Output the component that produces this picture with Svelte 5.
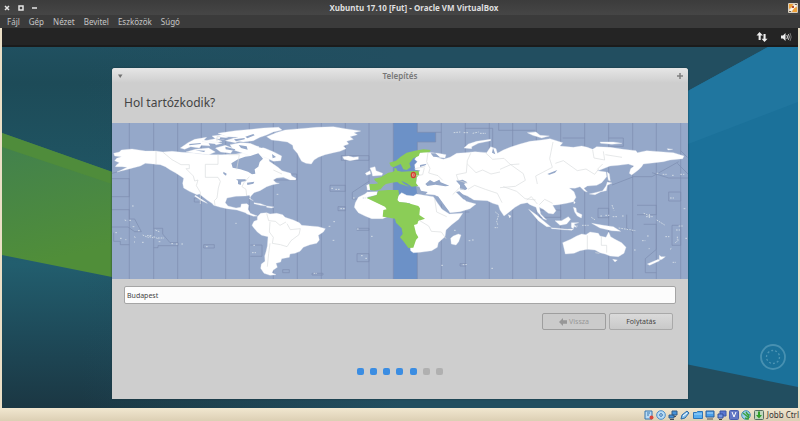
<script lang="ts">
	const menus = ['Fájl', 'Gép', 'Nézet', 'Bevitel', 'Eszközök', 'Súgó'];
	const steps = [1, 2, 3, 4, 5, 6, 7];
	const currentStep = 5;

	// straight parts of the time zone borders
	const zones = [52, 125, 197, 268, 341, 412, 484, 556, 628, 700, 771, 988, 1060, 1132, 1202, 1273, 1346, 1418, 1490, 1562, 1633, 1706];

	let city = $state('Budapest');
</script>

<div class="machine">
	<header class="titlebar">
		<div class="controls">
			<button aria-label="Bezárás">
				<svg viewBox="0 0 6 6"><path d="M1 1l4 4M5 1L1 5" /></svg>
			</button>
			<button aria-label="Teljes méret">
				<svg viewBox="0 0 6 6"><path d="M1 1h4v4H1z" /></svg>
			</button>
			<button aria-label="Kis méret">
				<svg viewBox="0 0 6 6"><path d="M0 3h5" /></svg>
			</button>
		</div>
		<h1>Xubuntu 17.10 [Fut] - Oracle VM VirtualBox</h1>
		<svg class="app-icon" viewBox="0 0 10 10">
			<rect width="10" height="10" rx="1" fill="#d9cfbe" />
			<path d="M1 1h4l-1 3-3 2zM6 5l3-1v5H4z" fill="#f0a238" />
			<path d="M2 8l6-6" stroke="#fff5e4" stroke-width="2" />
			<path d="M4 3h2v2H4z" fill="#b34a2f" />
			<path d="M1 8h2v1H1zM7 1h2v1H7z" fill="#6b6055" />
		</svg>
	</header>

	<nav class="menubar">
		{#each menus as menu}
			<button>{menu}</button>
		{/each}
	</nav>

	<main class="guest">
		<div class="panel">
			<svg class="net" viewBox="0 0 12 12" fill="#eee">
				<path d="M3.5 1L7 4.600H4.700V9H2.600V4.600H.5zM8.500 11L5.500 7.700H7.500V3H9.600V7.700h2z" />
			</svg>
			<svg class="sound" viewBox="0 0 12 12" fill="none" stroke="#ddd">
				<path d="M1 4.500h2L5.500 2v8L3 7.500H1z" fill="#eee" stroke="none" />
				<path d="M6.800 4q1.400 2 0 4" />
				<path d="M8.300 3q2 3 0 6" stroke="#bbb" />
				<path d="M10 2q2.400 4 0 8" stroke="#777" />
			</svg>
		</div>

		<div class="desktop">
			<svg class="wallpaper" viewBox="0 0 796 361" preserveAspectRatio="none">
				<defs>
					<linearGradient id="base" x1="0" y1="0" x2="0" y2="1">
						<stop offset="0" stop-color="#205060" />
						<stop offset=".1" stop-color="#1d4b58" />
						<stop offset=".6" stop-color="#225e6e" />
						<stop offset=".8" stop-color="#1e4a59" />
						<stop offset="1" stop-color="#1b3743" />
					</linearGradient>
					<linearGradient id="right-shade">
						<stop offset=".1" stop-color="#224e60" stop-opacity="0" />
						<stop offset=".5" stop-color="#224e60" />
					</linearGradient>
					<linearGradient id="green" x1="0" y1="0" x2=".3" y2="1">
						<stop offset="0" stop-color="#41804f" />
						<stop offset=".8" stop-color="#508e39" />
					</linearGradient>
				</defs>
				<path d="M0 0h796v361H0z" fill="url(#base)" />
				<path d="M0 0h796v361H0z" fill="url(#right-shade)" />
				<path d="M0 86L190 153V246L0 208z" fill="url(#green)" />
				<path d="M0 86L110 125V137L0 100z" fill="#4f8c3b" />
				<path d="M766 0h30v340L600 300V91z" fill="#1b719a" />
				<path d="M766 0h30v55L600 130V91z" fill="#20769f" />
			</svg>

			<section class="window">
				<header class="window-title">
					<button aria-label="Ablak menü">
						<svg viewBox="0 0 6 6"><path d="M1 1.500h4.500L3.200 5z" fill="#707070" /></svg>
					</button>
					<h2>Telepítés</h2>
					<button aria-label="Nagyítás">
						<svg viewBox="0 0 6 6"><path d="M3 0v6M0 3h6" stroke="#808080" stroke-width="1.500" /></svg>
					</button>
				</header>

				<h3>Hol tartózkodik?</h3>

				<svg class="map" viewBox="0 9 1728 468" role="img" aria-label="Időzónák térképe">
					<path d="M0 9h1728v468H0z" fill="#95a8c9" />
					<path d="M844 9h72v28h55v29h-55v411h-72z" fill="#6c91c7" />

					<g class="zones">
						{#each zones as x}
							<path d="M{x} 9v468" />
						{/each}
						<path d="M844 9v468M916 9v28h55v29h-55v411" />
						<path d="M0 160l52-14M0 176h52v54H0M0 269h52v28l16 0 20 38H68L48 321H0M5 338v26h20v10h27M125 325h27v17l22 26h24v9h-60v6h-13" />
						<path d="M247 234h21v12h-21zM275 374h32v10h-32zM415 375h35v34h-35M484 162h70v18h-70M654 196h46v18h-46zM678 260h22v12h-22z" />
						<path d="M688 107h83v14h-83zM771 184l-50 33v20h50M734 325h37v6h-37M735 401h36v24h-36zM600 460h33v5h-33zM512 449h20v9h-20z" />
						<path d="M971 37h17M1060 25h82v80M1060 276h12M1044 431h18v7h-18zM1160 9v22h110M1352 54h66M1490 54h44v25h-44" />
						<path d="M1706 92l20 20M1696 130l32 32M1500 195l65-25h55l80-45M1620 158l50 16h58M1670 216h36v27h-36zM1458 265h32v28h-32zM1575 256h58v28h-58M1544 284v40l18 12M1595 313h38v75l-33 28v42h33M1680 316h26v60h-26zM1282 270h64v22h-64z" />
					</g>

					<!-- Americas -->
					<g class="land">
						<path d="M5 100L22 96 28 90 60 87 100 93 132 93 152 96 180 94 210 97 240 98 270 102 300 104 330 104 372 102 395 98 430 106 450 102 470 112 472 124 498 142 510 152 536 160 539 168 552 175 551 180 534 180 514 172 494 174 484 180 492 188 502 190 479 195 464 200 444 212 426 218 417 228 412 236 424 242 416 238 412 226 400 228 372 229 345 234 340 248 348 258 372 264 386 262 388 252 405 251 410 256 408 268 415 280 436 288 425 289 405 282 400 278 375 270 345 266 325 262 305 256 300 250 285 240 262 222 255 224 232 214 215 204 212 190 215 175 205 168 190 158 175 150 160 140 145 134 115 131 100 130 85 138 65 143 40 150 15 156 28 150 45 142 30 140 10 140 14 134 22 128 8 122 14 115 28 110 8 108z" />
						<path d="M250 226l28 18 8 6-16-7-22-14z" />
						<path d="M205 84L228 68 248 58 284 52 276 60 296 64 330 70 300 78 268 76 262 84 236 80 218 88zM222 96L250 88 290 84 310 96 290 104 250 100zM300 48l30-4 20 6-15 8-25-2zM340 62l26-8 22 6-18 8zM310 84l30-8 26 10-10 14-30-4zM270 64l40-8 20 8-30 8z" />
						<path d="M318 40L370 32 420 28 454 24 500 22 510 30 484 36 464 45 444 52 424 62 394 66 354 60 378 52 344 50z" />
						<path d="M354 74L385 68 414 70 434 78 459 85 484 95 509 108 506 122 484 124 464 114 444 108 424 112 394 100 364 90z" />
					</g>
					<g class="sea">
						<path d="M378 118l-20 12 4 13 23 5 23 7 12 8 10-2-2-13 11-8 4-14 10-10-14-16-24 8-16 2z" />
						<path d="M334 155l10 6-2 6-8-6zM372 178l28 0 4 5-16 2-2 10-8-3 0-10zM405 188l22-3-3 6-18 4zM440 82l8-14 4 16zM380 75l24 4 3 10-20-5zM325 52l24 2-4 5-22-2zM290 70l20 2 3 10-8 5-10-8zM400 50l24-8 4 4-22 9z" />
						<path d="M232 72l34-3v3l-34 4zM250 91l30 1-4 4zM340 80l30 8-3 4-26-4zM480 102l12 9-10 4zM366 58l32-4v4l-26 6z" />
					</g>

					<!-- Greenland, South America, Atlantic -->
					<g class="land" transform="translate(414)">
						<path d="M50 50L78 38 105 30 150 26 200 22 250 20 285 26 332 33 312 38 322 44 300 50 310 58 290 64 296 72 280 78 288 86 270 94 250 98 225 104 205 112 192 120 184 132 168 130 155 124 148 112 142 100 130 86 128 76 112 66 85 62 65 60z" />
						<path d="M278 110l17-2 15 4 15-2v8l-25 4-18-4z" />
						<path d="M12 248l20 3 18 7-18-2-20-5zM50 258l22 3-8 3-14-2zM24 290h4" />
						<path d="M22 290L32 280 50 278 60 282 80 280 98 284 105 292 130 300 148 308 155 316 180 318 205 320 226 326 220 336 205 346 208 360 200 370 180 374 160 382 150 394 135 400 120 402 118 412 95 416 92 426 78 430 82 442 70 450 66 458 78 464 60 466 42 460 32 445 34 432 45 424 44 408 48 395 52 378 54 350 35 346 22 336 10 322 6 316 12 304 22 300z" />
						<path d="M325 232L345 222 352 216 382 215 380 225 350 232 410 262 412 290 398 296 365 296 345 288 325 278 313 262 316 248z" />
					</g>

					<!-- Eurasia and Africa -->
					<g class="land" transform="translate(744)">
						<path d="M112 230L125 218 140 226 160 228 170 222 220 230 232 248 246 268 268 282 308 280 296 298 275 314 258 330 255 350 235 368 232 382 215 392 180 397 160 398 152 392 148 360 160 300 150 250 112 246z" />
						<path d="M272 355l8-7 15-6 8 3-7 20-8 10-14-3z" />
						<path d="M30 144L45 140 48 152 68 160 66 166 38 168 35 155zM16 160L30 152 32 162 20 166zM20 196L28 192 32 210 22 210z" />
						<path d="M178 98L195 95 215 98 235 100 258 104 255 114 230 112 250 118 270 112 290 100 315 98 345 95 380 98 392 80 408 86 412 100 430 90 450 82 480 72 510 64 545 60 570 56 608 68 600 78 640 82 665 78 682 82 698 88 710 80 750 82 790 88 828 92 832 98 860 92 900 95 940 98 972 108 968 116 930 120 910 125 850 132 845 140 835 150 815 165 808 160 812 146 822 138 805 132 775 136 750 138 720 150 712 152 738 156 740 170 725 188 710 196 682 198 672 205 682 216 674 214 660 200 645 205 628 204 642 215 648 232 640 245 620 250 595 254 578 256 588 272 580 282 565 280 550 268 538 262 542 282 560 300 550 296 532 275 528 262 510 254 502 248 482 252 465 262 445 278 432 288 420 270 415 255 398 250 382 242 342 240 322 228 305 222 318 244 348 252 330 266 300 275 270 278 248 248 234 230 225 225 195 222 178 215 173 205 168 190 170 172 180 150 166 150 164 134 172 125 164 118z" />
						<path d="M312 84L325 72 350 64 392 58 392 62 355 70 335 80 335 86z" />
					</g>
					<g class="sea" transform="translate(744)">
						<path d="M196 192l14-12 12 7 16-8 4 8 26 10-12 2-30-5-24 4zM288 182l20-3 14 8-10 5 10 14-6 4-16-2 0-12zM228 230l6-1 18 26 16 20-6 0-18-24zM288 216l10-2 20 18 16 4-6 8-18-6zM168 198l10 2 5 12 20 4-8 8-24-5z" />
						<path d="M562 162l30-12-7 8-17 6zM180 135l20-4-4 5-16 5zM212 100l8 10 20 2-14-12zM399 83l7 20-10-5z" />
					</g>
					<g class="zone-land" transform="translate(744)">
						<path d="M20 234L50 225 55 212 85 210 115 210 117 222 112 240 118 246 140 248 175 258 180 265 178 285 195 296 175 303 172 312 162 315 168 340 175 352 168 360 160 383 145 384 132 366 120 352 128 342 125 325 108 308 105 296 80 292 68 290 70 270 80 268 75 260z" />
						<path d="M28 192L45 192 55 190 45 182 42 176 62 172 85 158 98 156 105 150 100 146 108 144 112 152 125 155 150 154 175 152 178 165 170 172 168 190 175 198 155 200 140 190 124 182 130 190 148 200 120 192 112 186 95 188 78 192 70 198 62 208 45 212 30 210z" />
						<path d="M88 128L108 122 122 110 140 98 165 92 190 88 212 90 208 97 180 98 176 108 160 115 148 130 152 142 140 150 130 148 122 132 100 142 92 138z" />
					</g>

					<!-- Pacific side -->
					<g class="land" transform="translate(1164)">
						<path d="M188 368L212 358 230 348 245 342 258 344 270 336 295 340 300 348 318 352 326 336 332 350 345 358 365 368 378 382 372 400 355 410 330 408 315 402 300 398 285 390 262 388 240 392 222 400 196 402 192 385z" />
						<path d="M338 418l14 2-7 6zM478 406l6 4 12 0-10 8-8 2zM442 432l33-14 4 4-30 14z" />
						<path d="M165 302L185 302 205 290 212 298 200 312 180 316zM86 268L110 285 130 302 152 320 140 320 115 302zM152 323l50 5 18-1-4 4-60-5zM214 308l22 0-14 4 8 10-8-2-2 6-6-4zM275 310l35 6 30 4 22 14-27-2-35-8z" />
						<path d="M220 262l8 2 2 12 16 8-2 10-12-6-8-12zM221 243l5 4-4 5zM25 284l8 4-4 6zM268 222l17-4 23-6 10-14 4-12 14 3-14 7-3 16-16 3-18 9zM321 156l7 5 3 22-6-2z" />
						<path d="M82 38l26-2 12 10 28 2-23 6-27-8zM300 66l40 0 26 4-30 3-34-3zM502 86l16 2-14 2z" />
					</g>

					<!-- small islands -->
					<path class="islands" d="M60 258h5M38 300l8 3M52 301h7M62 320h6M78 332h7M10 338h8M24 355h5M40 359h3M66 350l6 3M66 366h3M92 345l18 8M105 347h14M112 350l14 4M125 350l15 7M138 354h18M140 365h8M130 330l14 6M90 367h5M178 371h8M192 372h6M208 372h5M282 380h6M370 310h4M424 376h6M420 398h12M494 223h5M658 205h8M670 208h15M685 266h13M723 234h8M752 234h10M664 305h5M650 319h5M662 361h6M735 327h6M777 349h5M747 407h6M760 415h5M605 460h10" />
					<path class="islands" d="M1025 38l20-2M1055 38h16M1082 40l18-4M1104 40h18M1150 276l10 8-6 20 3 10M1148 323h10M1070 362h5M1080 360h5M1026 331h8M1052 434h14M1138 445h8M988 436h6M1500 255l6 16M1438 292l12 8M1465 288h8M1480 286h12M1502 290h14M1530 288h8M1410 316h20M1385 318h12M1520 324l50 8M1595 280l20 8M1602 290h20M1612 282v12M1634 300l24 15M1590 362h10M1605 348h6M1566 390h6M1610 386h3M1660 350h12M1674 388l6-4M1692 330h12M1700 318h12M1696 350v10M1690 368l12-10M1720 355h5M1715 266h8M1634 160h8M1652 163h12M1680 166h8M1705 163h12M1674 234h12M1682 427h10" />

					<path class="borders" d="M132 93v40M152 96l28 23 27 15h25v12h-10l22 22 4 15 10-3-5 17 12 20v35M318 104v29h-38v39h38l7 12-6 20-4 30-8 8 2 14M350 104h32l-8 44M412 170l-16 18-6 12 12 8 2 20M484 150l26 12M315 64v-14h10" />
					<path class="borders" d="M464 280l6 22 20 2 14 12 18-10M474 306l-2 30 12 16-3 18 24 4 20 6 12-18 24-18 4-18-30 3-10-18M474 370l-4 30-4 40" />
					<path class="borders" d="M910 168l22-4 5-20M908 146l32-6M948 97l-4 28 10 20-4 14 28 8 14 14M1022 224l20-20 15 6M1076 100l-10 22-3 36-30 6 5 16 28 10M1066 132l26 26 20-8 25 12 27-6M1068 208l20-12 32 12 36 12 14 28M1120 98l22 20 34-3 16 16 42 30 6 20-30 18-46 4M1276 192l-5-24 50-26-8-26 10-50M1174 200l40 14 25 22 32 4M1164 148l32-14 26-2M1244 240l14-10 18 22M1282 254l16-16 24 12M1330 130l24-8 42 30 26-5 26 16 12-16M1442 90l4 24 32 6-4-26M1480 104l50 8M1472 132l-16 16M1426 346v42M1468 348v28h16v22M1450 398l12 2" />
					<path class="borders" d="M920 300l30 18 8 16 30 2 14 20M968 236l6 40 30 14" />

					<ellipse cx="904" cy="165" rx="6" ry="8" fill="#e9aea0" stroke="#d23c2e" stroke-width="4" />
					<path d="M904 160v10" stroke="#c73a30" stroke-width="2" />
				</svg>

				<input type="text" aria-label="Város" bind:value={city} />

				<div class="actions">
					<button disabled>
						<svg viewBox="0 0 8 8"><path d="M4 0v2.300h4v3.400H4V8L0 4z" fill="#979797" /></svg>
						Vissza
					</button>
					<button>Folytatás</button>
				</div>

				<div class="steps">
					{#each steps as step}
						<span class:done={step <= currentStep}></span>
					{/each}
				</div>
			</section>

			<svg class="ring" viewBox="0 0 26 26" fill="none" stroke="#5fa2bd">
				<circle cx="13" cy="13" r="12" stroke-width="1.800" opacity=".65" />
				<circle cx="13" cy="13" r="6.500" stroke-width="1.300" stroke-dasharray="2 2" opacity=".75" />
			</svg>
		</div>
	</main>

	<footer class="statusbar">
		<div class="devices">
			<svg viewBox="0 0 10 10">
				<path d="M1 1h7v8H1z" fill="#b9dcf5" stroke="#3774ae" />
				<path d="M3 3h3M3 5h2" stroke="#3774ae" />
				<circle cx="7.500" cy="7.500" r="2" fill="#d9453c" />
			</svg>
			<svg viewBox="0 0 10 10">
				<circle cx="5" cy="5" r="4.300" fill="#b7dcf6" stroke="#4a8cc8" />
				<circle cx="5" cy="5" r="1.300" fill="#fff" stroke="#2c6cab" />
			</svg>
			<svg viewBox="0 0 10 10">
				<path d="M4 1h5v4H4zM1 5h5v3H1z" fill="#4592d8" stroke="#315a86" />
				<path d="M2 9.500h4M6 6.500h2" stroke="#454f5c" />
			</svg>
			<svg viewBox="0 0 10 10">
				<path d="M1 9l1-4 5-4 2 2-4 5z" fill="#8ac3ee" stroke="#2c6aa5" />
				<path d="M3 6l4-3" stroke="#fff" />
			</svg>
			<svg viewBox="0 0 10 10">
				<path d="M.5 2.500h3l1-1h5v7h-9z" fill="#58aef0" stroke="#2d75b9" />
				<path d="M1 4h8" stroke="#a6d7fa" />
			</svg>
			<svg viewBox="0 0 10 10">
				<path d="M1 1h8v6H1z" fill="#4a9ee8" stroke="#2d5f9b" />
				<path d="M2 3h6" stroke="#afd9fa" />
				<path d="M2 9h6" stroke="#555" />
			</svg>
			<svg viewBox="0 0 10 10">
				<path d="M3 1h6v5H3z" fill="#5a77d2" stroke="#3957a6" />
				<path d="M1 4h5v4H1z" fill="#7295e6" stroke="#334f97" />
				<path d="M2 9.500h3" stroke="#444" />
			</svg>
			<svg viewBox="0 0 10 10">
				<rect x=".5" y=".5" width="9" height="9" rx="1" fill="#6377c5" stroke="#475dad" />
				<path d="M3 2l2 5 2-5" fill="none" stroke="#fff" />
			</svg>
			<svg viewBox="0 0 10 10">
				<circle cx="5" cy="5" r="4.300" fill="#9dd3e9" stroke="#438db3" />
				<path d="M2 3l5 4M4 8l3 1 1-5M5 2l2 3" stroke="#3ca13d" stroke-width="1.500" fill="none" />
			</svg>
			<svg viewBox="0 0 10 10">
				<rect x=".5" y=".5" width="9" height="9" rx="1" fill="#bfd6bd" stroke="#566f61" />
				<path d="M4 1.500h2V5h2L5 8.500 2 5h2z" fill="#2f9e25" />
			</svg>
		</div>
		<span>Jobb Ctrl</span>
	</footer>
</div>

<style>
	:global(body) {
		margin: 0;
	}
	.machine {
		display: flex;
		flex-direction: column;
		min-height: 100vh;
		overflow: hidden;
		background: #ebdfc6;
		font-family: 'Noto Sans', 'Open Sans', sans-serif;
		font-size: 8px;
	}
	svg {
		display: block;
	}
	h1,
	h2,
	h3 {
		margin: 0;
	}
	button {
		font: inherit;
		color: inherit;
		margin: 0;
		padding: 0;
		border: 0;
		background: none;
	}
	.titlebar {
		display: grid;
		grid-template-columns: 1fr auto 1fr;
		align-items: center;
		height: 15px;
		padding: 0 2px 0 4px;
		background: linear-gradient(#3c3c3c, #464646);
		color: #dfdfdf;
	}
	.titlebar h1 {
		padding-left: 26px;
		font-size: 8px;
		line-height: 15px;
	}
	.controls {
		display: flex;
		gap: 8px;
	}
	.controls svg {
		width: 6px;
		height: 6px;
		fill: none;
		stroke: #e6e6e6;
		stroke-width: 1.500;
	}
	.app-icon {
		width: 10px;
		height: 10px;
		justify-self: end;
	}
	.menubar {
		display: flex;
		gap: 9px;
		height: 13px;
		padding: 0 7px;
		background: #3b3b3b;
		color: #c6c6c6;
		line-height: 13px;
	}
	.guest {
		flex: 1;
		display: flex;
		flex-direction: column;
		padding: 0 2px;
	}
	.panel {
		display: flex;
		justify-content: flex-end;
		align-items: center;
		gap: 12px;
		height: 17px;
		padding: 0 6px;
		background: #242424;
		border-bottom: 2px solid #1b1b1b;
	}
	.panel svg {
		width: 12px;
		height: 12px;
	}
	.desktop {
		position: relative;
		flex: 1;
		display: flex;
		flex-direction: column;
		padding: 21px 110px 9px;
	}
	.wallpaper {
		position: absolute;
		inset: 0;
		width: 100%;
		height: 100%;
	}
	.window {
		position: relative;
		flex: 1;
		display: flex;
		flex-direction: column;
		background: #cecece;
		border-radius: 3px 3px 0 0;
		box-shadow: 0 0 2px #17323c;
		color: #444;
	}
	.window-title {
		display: flex;
		justify-content: space-between;
		align-items: center;
		height: 15px;
		padding: 0 5px;
		border-radius: 3px 3px 0 0;
		background: linear-gradient(#e6e6e6, #cecece);
	}
	.window-title h2 {
		font-size: 8px;
		font-weight: 600;
		line-height: 15px;
		color: #777;
	}
	.window-title svg {
		width: 6px;
		height: 6px;
	}
	h3 {
		padding: 0 12px;
		font-size: 12px;
		font-weight: 400;
		line-height: 40px;
	}
	.map {
		width: 100%;
		height: auto;
	}
	.zones {
		fill: none;
		stroke: #7c8daf;
		stroke-width: 2;
	}
	.land {
		fill: #fff;
		stroke: #e9eef2;
		stroke-width: 1;
	}
	.sea {
		fill: #95a8c9;
	}
	.zone-land {
		fill: #8bcd57;
	}
	.islands {
		fill: none;
		stroke: #d0dae4;
		stroke-width: 3;
		stroke-dasharray: 5 3;
	}
	.borders {
		fill: none;
		stroke: #d9dcde;
		stroke-width: 2;
	}
	input {
		height: 18px;
		margin: 7px 12px 0;
		padding: 0 2px;
		box-sizing: border-box;
		border: 1px solid #a5a5a5;
		border-radius: 2px;
		background: #fcfcfc;
		color: #444;
		font: inherit;
		font-size: 7px;
	}
	.actions {
		display: flex;
		justify-content: flex-end;
		gap: 3px;
		margin: 9px 15px 0;
		font-size: 7px;
	}
	.actions button {
		display: flex;
		justify-content: center;
		align-items: center;
		gap: 2px;
		width: 64px;
		height: 17px;
		border: 1px solid #a9a9a9;
		border-radius: 2px;
		background: linear-gradient(#dadada, #c9c9c9);
	}
	.actions button:disabled {
		background: #cbcbcb;
		border-color: #9e9e9e;
		color: #979797;
	}
	.actions svg {
		width: 8px;
		height: 8px;
	}
	.steps {
		display: flex;
		justify-content: space-between;
		align-self: center;
		width: 87px;
		margin-top: 38px;
	}
	.steps span {
		width: 7px;
		height: 7px;
		border-radius: 2px;
		background: #b0b0b0;
	}
	.steps .done {
		background: #3b8de2;
	}
	.ring {
		position: absolute;
		right: 12px;
		bottom: 38px;
		width: 26px;
		height: 26px;
	}
	.statusbar {
		display: flex;
		justify-content: flex-end;
		align-items: center;
		gap: 3px;
		height: 13px;
		padding: 0 1px;
		background: linear-gradient(#f1e7d0, #dccfb4);
		color: #333;
		line-height: 13px;
	}
	.devices {
		display: flex;
		justify-content: space-between;
		width: 120px;
	}
	.devices svg {
		width: 10px;
		height: 10px;
	}
</style>
